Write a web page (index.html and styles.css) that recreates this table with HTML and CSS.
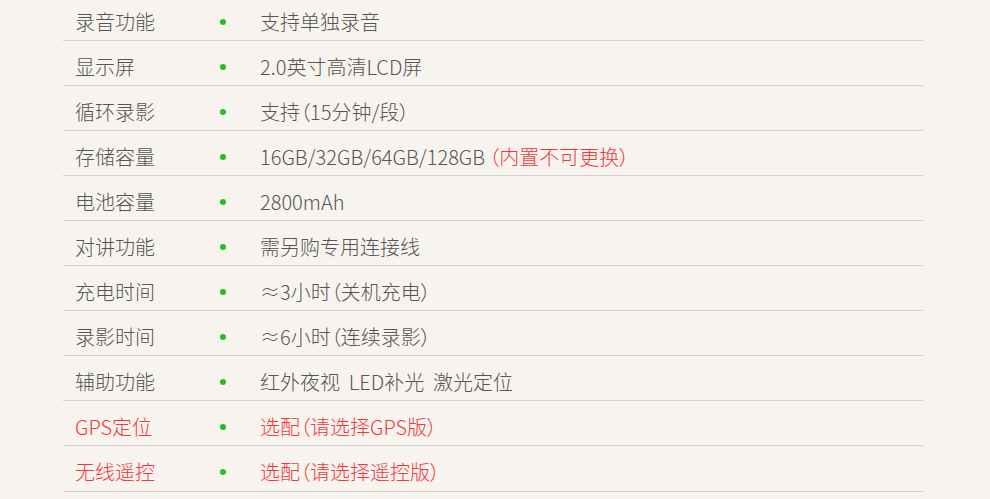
FILE: index.html
```html
<!DOCTYPE html>
<html lang="zh-CN">
<head>
<meta charset="utf-8">
<title>参数</title>
<link rel="stylesheet" href="styles.css">
</head>
<body>
<div class="spec">
  <div class="row"><span class="label">录音功能</span><span class="dot"></span><span class="value">支持单独录音</span></div>
  <div class="row"><span class="label">显示屏</span><span class="dot"></span><span class="value">2.0英寸高清LCD屏</span></div>
  <div class="row"><span class="label">循环录影</span><span class="dot"></span><span class="value">支持（15分钟/段）</span></div>
  <div class="row"><span class="label">存储容量</span><span class="dot"></span><span class="value">16GB/32GB/64GB/128GB<span class="red note">（内置不可更换）</span></span></div>
  <div class="row"><span class="label">电池容量</span><span class="dot"></span><span class="value">2800mAh</span></div>
  <div class="row"><span class="label">对讲功能</span><span class="dot"></span><span class="value">需另购专用连接线</span></div>
  <div class="row"><span class="label">充电时间</span><span class="dot"></span><span class="value">≈3小时（关机充电）</span></div>
  <div class="row"><span class="label">录影时间</span><span class="dot"></span><span class="value">≈6小时（连续录影）</span></div>
  <div class="row"><span class="label">辅助功能</span><span class="dot"></span><span class="value">红外夜视&nbsp;&nbsp;LED补光&nbsp;&nbsp;激光定位</span></div>
  <div class="row red"><span class="label">GPS定位</span><span class="dot"></span><span class="value">选配（请选择GPS版）</span></div>
  <div class="row red"><span class="label">无线遥控</span><span class="dot"></span><span class="value">选配（请选择遥控版）</span></div>
</div>
</body>
</html>
```

FILE: styles.css
```css
html, body {
  margin: 0;
  padding: 0;
  background: #f7f4ef;
}
body {
  font-family: "Noto Sans CJK SC", "Noto Sans", sans-serif;
  font-size: 20px;
  font-weight: 300;
  color: #555;
  overflow: hidden;
  height: 499px;
  font-feature-settings: "palt";
}
.spec {
  width: 860px;
  margin: -4px 0 0 63px;
}
.row {
  display: flex;
  align-items: center;
  box-sizing: border-box;
  height: 45.05px;
  padding-top: 7px;
  border-bottom: 1px solid #d5d1cb;
  line-height: 24px;
}
.label {
  width: 148px;
  padding-left: 12px;
  box-sizing: border-box;
  white-space: nowrap;
}
.dot {
  width: 6px;
  height: 6px;
  border-radius: 50%;
  background: #22c122;
  margin-left: 9px;
}
.value {
  margin-left: 34px;
  white-space: nowrap;
}
.red {
  color: #f2363a;
}
.note {
  margin-left: 4px;
}
```
